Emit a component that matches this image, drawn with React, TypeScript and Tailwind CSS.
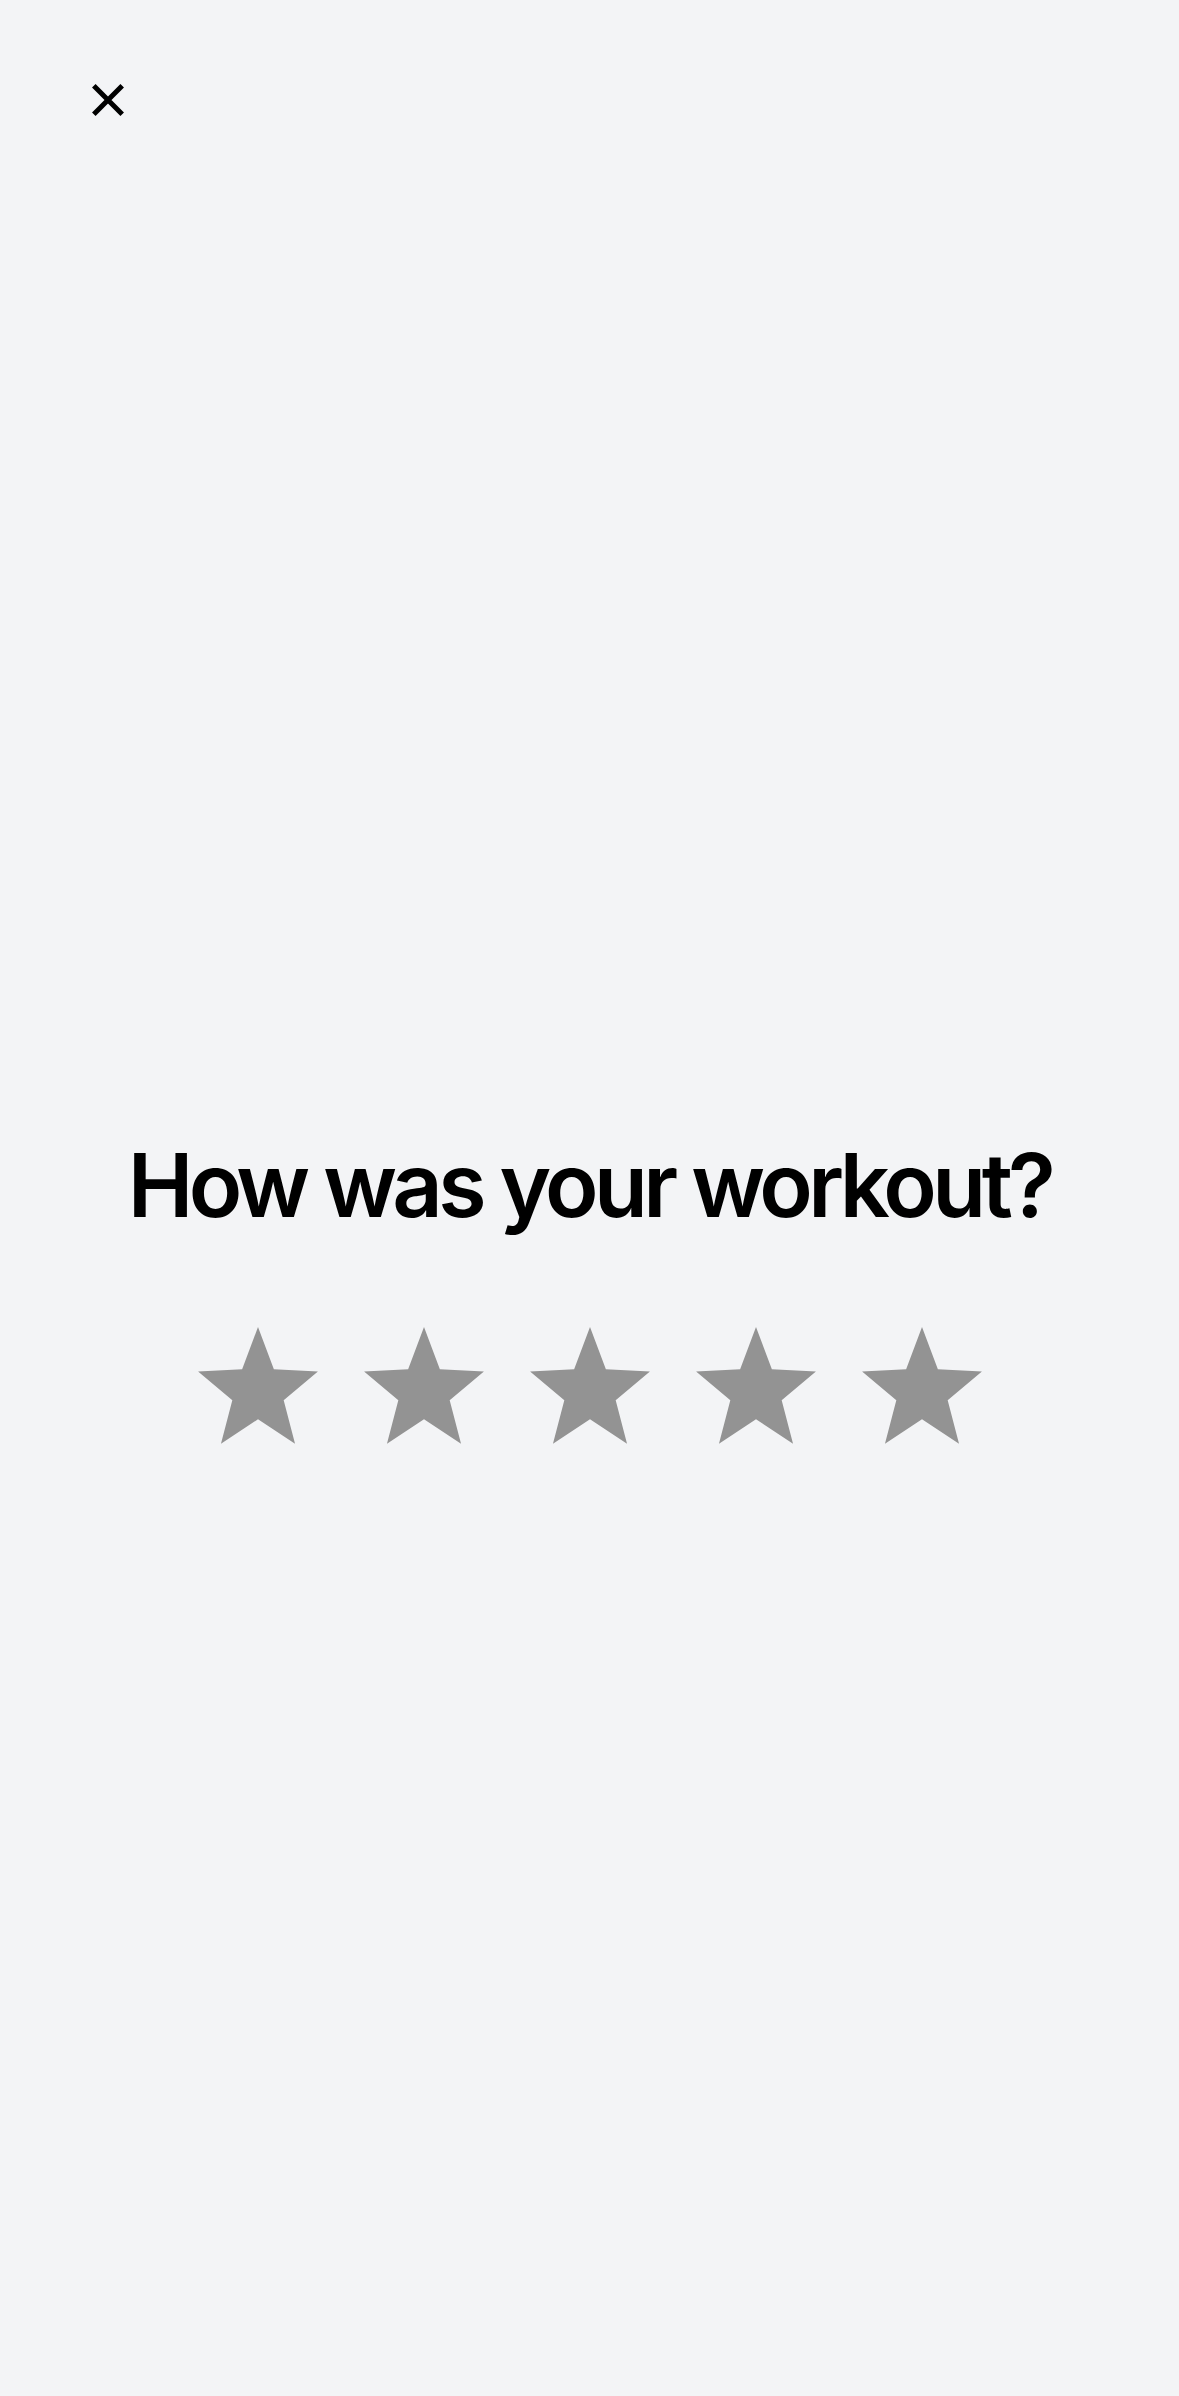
function Star() {
  // five-point star, outer radius 63, inner radius 27, a touch taller than wide
  const pts: string[] = []
  for (let i = 0; i < 10; i++) {
    const r = i % 2 === 0 ? 63 : 27
    const a = (Math.PI / 5) * i - Math.PI / 2
    const x = 63 + r * Math.cos(a)
    const y = (63 + r * Math.sin(a)) * 1.025
    pts.push(`${x.toFixed(2)},${y.toFixed(2)}`)
  }
  return (
    <svg width="126" height="120" viewBox="0 0 126 120" className="block">
      <polygon points={pts.join(' ')} fill="#939393" />
    </svg>
  )
}

export default function App() {
  return (
    <div className="min-h-screen bg-[#f3f4f6] font-['Inter','Liberation_Sans',sans-serif] text-black">
      <div className="pl-[92px] pt-[84px]">
        <button type="button" aria-label="Close" className="block w-[32px] h-[32px]">
          <svg width="32" height="32" viewBox="0 0 32 32" className="block">
            <path d="M1.8 1.8 L30.2 30.2 M30.2 1.8 L1.8 30.2" stroke="black" strokeWidth="5" />
          </svg>
        </button>
      </div>

      <h1 className="mt-[1025px] text-center text-[88px] leading-[88px] font-semibold tracking-[-4.6px]">
        How was your workout?
      </h1>

      <div className="mt-[98px] flex justify-center gap-10">
        {[1, 2, 3, 4, 5].map((n) => (
          <button key={n} type="button" aria-label={`${n} star`}>
            <Star />
          </button>
        ))}
      </div>
    </div>
  )
}
